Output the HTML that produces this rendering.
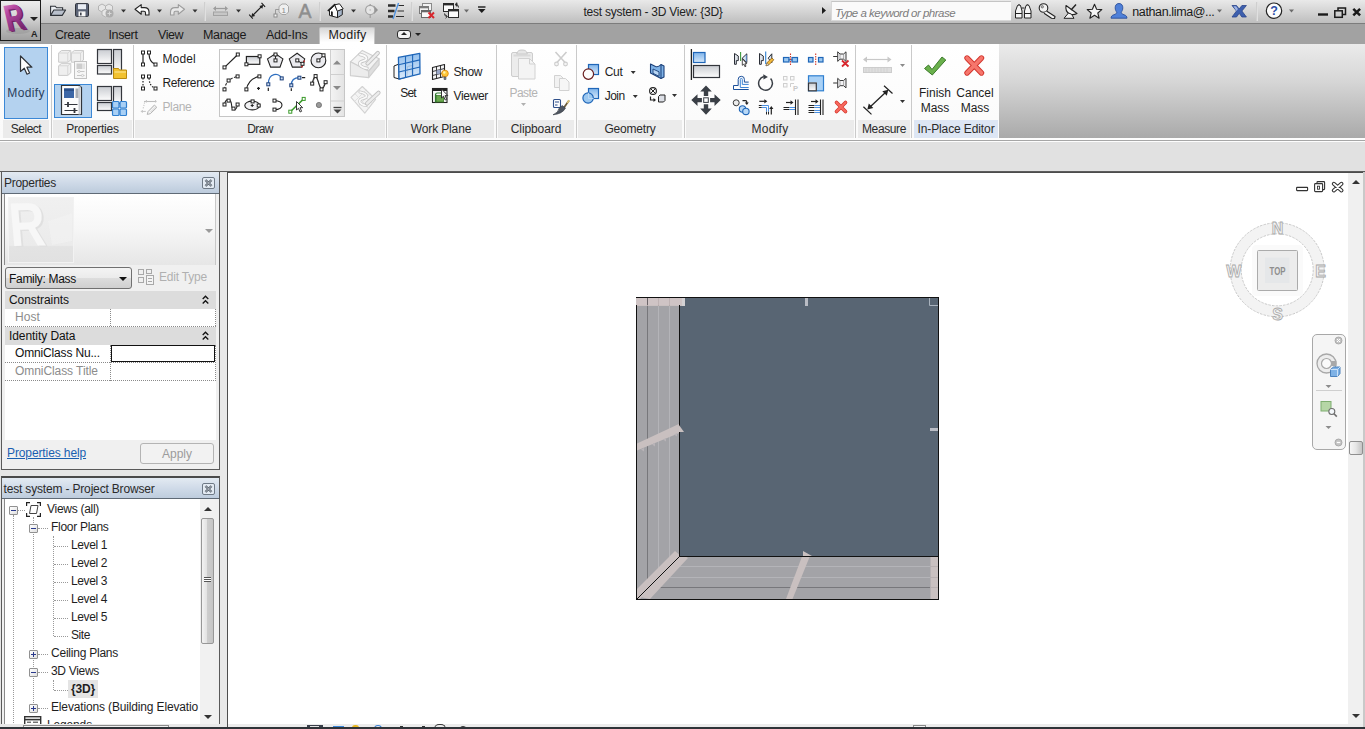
<!DOCTYPE html>
<html><head><meta charset="utf-8"><title>test system - 3D View: {3D}</title>
<style>
*{box-sizing:border-box;margin:0;padding:0}
html,body{width:1365px;height:729px;overflow:hidden;background:#e1e1e1;font-family:"Liberation Sans",sans-serif;font-size:12px;color:#1e1e1e}
.a{position:absolute}
.t{position:absolute;white-space:nowrap;line-height:14px;font-size:12px}
.c{text-align:center}
.dis{color:#b4b4b4}
svg{position:absolute;overflow:visible}
#title{left:0;top:0;width:1365px;height:24px;background:linear-gradient(#e9e9e9,#d4d4d4 50%,#bebebe);border-bottom:1px solid #7c7c7c}
#tabs{left:0;top:24px;width:1365px;height:20px;background:#a2a2a2}
#ribbon{left:0;top:44px;width:1365px;height:94px;background:linear-gradient(#ebebeb,#d6d6d6 40%,#a9a9a9)}
#ribwhite{left:0;top:44px;width:999px;height:94px;background:linear-gradient(#ffffff,#fafafa)}
#ribline1{left:0;top:140px;width:1365px;height:1px;background:#a6a6a6}
#ribline2{left:0;top:138px;width:1365px;height:4px;background:#fdfdfd}
#opt{left:0;top:142px;width:1365px;height:29px;background:#e1e1e1}
#optline{left:0;top:171px;width:1365px;height:1px;background:#5c5c5c}
.pl{position:absolute;top:120px;height:18px;padding-top:1px;background:#ebebeb;text-align:center;line-height:17px;font-size:12px;color:#2a2a2a;white-space:nowrap}
.sep{position:absolute;top:45px;width:1px;height:93px;background:#cacaca}
.tab{position:absolute;top:28px;line-height:15px;font-size:12.5px;color:#1a1a1a;white-space:nowrap}
.dd{position:absolute;width:0;height:0;border-left:3px solid transparent;border-right:3px solid transparent;border-top:3px solid #333}
.xb{position:absolute;width:9px;height:9px;border:1px solid #919191;background:linear-gradient(135deg,#fff,#e0e0e0);border-radius:1px}
.xb i{position:absolute;left:1px;top:3px;width:5px;height:1px;background:#2a3a8c}
.xb b{position:absolute;left:3px;top:1px;width:1px;height:5px;background:#2a3a8c}
</style></head><body>
<div id="title" class="a"></div>
<div id="tabs" class="a"></div>
<!-- app button -->
<div class="a" style="left:0;top:0;width:41px;height:41px;border:1px solid #1c1c1c;background:linear-gradient(#ededed,#d6d6d6 40%,#b4b4b4 75%,#a0a0a0)"></div>
<svg style="left:1px;top:1px" width="39" height="39" viewBox="0 0 39 39" font-family="Liberation Sans, sans-serif">
<defs><linearGradient id="rg" x1="0" y1="0" x2="0.300" y2="1"><stop offset="0" stop-color="#e6a8d6"/><stop offset="0.400" stop-color="#b84aa2"/><stop offset="1" stop-color="#6e2266"/></linearGradient></defs>
<ellipse cx="17" cy="30" rx="12" ry="3" fill="#8a8a8a" opacity="0.350"/>
<g transform="translate(6.500 30) rotate(-13) skewY(5) scale(0.700 1)">
<text x="2.600" y="1.500" font-size="37" font-weight="bold" fill="#6c1f64">R</text>
<text x="1.300" y="0.700" font-size="37" font-weight="bold" fill="#8e2f84">R</text>
<text x="0" y="0" font-size="37" font-weight="bold" fill="url(#rg)">R</text>
</g>
</svg>
<div class="t" style="left:31px;top:29px;font-size:9px;font-weight:bold;line-height:10px;color:#222">A</div>
<div class="dd" style="left:30px;top:17px;border-left-width:4px;border-right-width:4px;border-top-width:4px;border-top-color:#222"></div>
<div class="a" style="left:397px;top:30px;width:14px;height:9px;border:1px solid #2a2a2a;border-radius:3px;background:#f2f2f2"></div>
<div class="dd" style="left:401px;top:32px;border-top:none;border-bottom:3px solid #222"></div>
<div class="dd" style="left:415px;top:33px;border-top-color:#222"></div>
<!-- tabs -->
<div class="tab" style="letter-spacing:-0.42px;left:55px">Create</div>
<div class="tab" style="letter-spacing:-0.38px;left:108.500px">Insert</div>
<div class="tab" style="letter-spacing:-0.47px;left:158px">View</div>
<div class="tab" style="letter-spacing:-0.36px;left:203px">Manage</div>
<div class="tab" style="letter-spacing:-0.23px;left:266px">Add-Ins</div>
<div class="a" style="left:319px;top:27px;width:56px;height:18px;background:linear-gradient(#d6d6d6,#efefef 45%,#ffffff 85%);border:1px solid #c4c4c4;border-bottom:none;border-radius:2px 2px 0 0"></div>
<div class="tab" style="letter-spacing:0.20px;left:328.500px">Modify</div>
<!-- title text -->
<div class="t" style="letter-spacing:-0.25px;left:583.500px;top:5px;font-size:12px;color:#222">test system - 3D View: {3D}</div>
<!-- search box -->
<div class="a" style="left:831px;top:1px;width:180px;height:20px;background:#fafafa;border:1px solid #d8d8d8;border-right:none;border-top-color:#c4c4c4"></div>
<div class="t" style="letter-spacing:-0.50px;left:835px;top:6px;font-style:italic;color:#7c7c7c;font-size:11.5px">Type a keyword or phrase</div>
<div class="t" style="letter-spacing:-0.38px;left:1132.300px;top:5px;font-size:12.5px;color:#1a1a1a">nathan.lima@...</div>
<svg style="left:0;top:0" width="1365" height="24" viewBox="0 0 1365 24" fill="none" font-family="Liberation Sans, sans-serif">
<!-- open -->
<path d="M50.600 15.400V6.200h4.600l1.400 1.600h6v2.400" fill="#eceff3" stroke="#2e3238" stroke-width="1.100"/>
<path d="M50.600 15.400l3.200-5.400h11.800l-3.400 5.400z" fill="#b9c0cc" stroke="#2e3238" stroke-width="1.100" stroke-linejoin="round"/>
<!-- save -->
<rect x="75.500" y="3.600" width="13" height="12.800" rx="1" fill="#5b6375" stroke="#30343c" stroke-width="1"/>
<rect x="78" y="4.200" width="8" height="5" fill="#e9edf3"/>
<rect x="78.500" y="11.400" width="7" height="5" fill="#f6f6f6"/><rect x="80" y="12.600" width="1.600" height="2.800" fill="#3a3f4a"/>
<!-- sync disabled -->
<g stroke="#b4b4b4" stroke-width="1" fill="#e6e6e6"><path d="M98.500 6l3.500-2 3.500 2v4l-3.500 2-3.500-2z"/><path d="M105.500 6l3.500-2 3.500 2v4l-3.500 2-3.500-2z"/><path d="M102 11l3.500-2 3.500 2v4l-3.500 2-3.500-2z"/></g>
<circle cx="109.500" cy="13.500" r="4" fill="#adadad"/><path d="M107.500 13.500h4M109.500 11.500v4" stroke="#d8d8d8" stroke-width="1"/>
<!-- dropdown arrows -->
<g fill="#333"><path d="M121 9.500h5l-2.500 3z"/><path d="M157 9.500h5l-2.500 3z"/><path d="M192.500 9.500h5l-2.500 3z"/><path d="M236 9.500h5l-2.500 3z"/><path d="M351 9.500h5l-2.500 3z"/></g>
<g fill="#6a6a6a"><path d="M464 9.500h5l-2.500 3z"/><path d="M1217 9.500h5l-2.500 3z"/><path d="M1289 9.500h5l-2.500 3z"/></g>
<!-- undo -->
<path d="M135 9.300L141.200 4.600V7.600H144.500Q149 7.600 149 12V15H145.500V12.800Q145.500 11.200 144 11.200H141.200V14.200Z" fill="#fdfdfd" stroke="#222" stroke-width="1.100" stroke-linejoin="round"/>
<!-- redo -->
<path d="M184.500 9.300L178.300 4.600V7.600H175Q170.500 7.600 170.500 12V15H174V12.800Q174 11.200 175.500 11.200H178.300V14.200Z" fill="#e9e9e9" stroke="#9c9c9c" stroke-width="1.100" stroke-linejoin="round"/>
<!-- separators -->
<path d="M204.500 2V21M319.500 2V21M411.500 2V21M1256.500 2V21" stroke="#cfcfcf"/><path d="M205.500 2V21M320.500 2V21M412.500 2V21M1257.500 2V21" stroke="#e0e0e0"/>
<!-- measure gray -->
<path d="M214 8.500h13" stroke="#9c9c9c" stroke-width="1.200"/><path d="M213 8.500l3-2.500v5zM228 8.500l-3-2.500v5z" fill="#9c9c9c"/>
<rect x="213.500" y="12" width="14" height="3.500" fill="#c6c6c6" stroke="#a2a2a2"/>
<!-- aligned dim -->
<path d="M252.500 15.700L262 6.200" stroke="#1c1c1c" stroke-width="1.200"/><path d="M251.300 16.900l0.900-3.800 2.900 2.900zM263.200 5l-0.900 3.800-2.900-2.900z" fill="#1c1c1c"/>
<path d="M249.200 14.600l3.600 4M261.500 2.900l3.600 4" stroke="#1c1c1c" stroke-width="1.100"/>
<!-- tag -->
<path d="M279 6.500l3-2.500h4l2.500 2.500v5.500l-2.500 2.500h-4l-3-2.500z" fill="#efefef" stroke="#a6a6a6"/>
<path d="M279 9.500h-3.500v4.500" stroke="#9a9a9a"/><rect x="274" y="14" width="3" height="3" fill="#f4f4f4" stroke="#8c8c8c"/>
<text x="283.800" y="12.500" font-size="8" fill="#8a8a8a" text-anchor="middle">1</text>
<!-- A -->
<text x="305" y="18" font-size="19.500" fill="#8e8e8e" text-anchor="middle" stroke="#8e8e8e" stroke-width="0.500">A</text>
<!-- house -->
<path d="M329.500 10.200L334.700 5.200 337.500 10.800V17.600L329.500 15.400Z" fill="#fbfbfb" stroke="#1e1e1e" stroke-width="1" stroke-linejoin="round"/>
<path d="M337.500 10.800L342.300 8.800V14.700L337.500 17.600Z" fill="#a7b6ca" stroke="#1e1e1e" stroke-width="1" stroke-linejoin="round"/>
<path d="M334.700 4.800L339.500 3.800 343.200 8.800 337.300 11.200Z" fill="#fdfdfd" stroke="#1e1e1e" stroke-width="1" stroke-linejoin="round"/>
<path d="M328.300 10.500L334.700 4.600" stroke="#1e1e1e" stroke-width="1.700" stroke-linecap="round"/>
<path d="M331 11.200l1.800 0.500v4.600l-1.800-0.500z" fill="#1e1e1e"/>
<!-- section gray -->
<path d="M370.200 4v14" stroke="#a2a2a2" stroke-width="1.300"/>
<path d="M373.800 5.500l4.200 4.400-4.200 4.400z" fill="#929292"/>
<circle cx="370.200" cy="9.900" r="4.600" fill="#e6e6e6" stroke="#a2a2a2" stroke-width="1.200"/><circle cx="370.200" cy="9.900" r="0.900" fill="#c4c4c4"/>
<!-- thin lines -->
<path d="M388 5.500h7.500M388 11h6.500M388 16.500h5" stroke="#2c2c2c" stroke-width="2.600"/>
<path d="M398.500 5.500h5.500M397.500 11h6.500M396 16.500h8" stroke="#2c2c2c" stroke-width="1"/>
<path d="M398.500 3l-5.500 16" stroke="#4a90e2" stroke-width="1.300"/>
<!-- close hidden -->
<rect x="422.500" y="3.500" width="9" height="7" fill="#f2f2f2" stroke="#8a8a8a"/><rect x="419.500" y="6.500" width="9" height="7" fill="#f2f2f2" stroke="#7a7a7a"/><path d="M419.500 7.500h9" stroke="#7a7a7a" stroke-width="1.600"/>
<rect x="421.500" y="10.500" width="9" height="7" fill="#fafafa" stroke="#6a6a6a"/><path d="M421.500 11.500h9" stroke="#6a6a6a" stroke-width="1.600"/>
<path d="M428.500 12.500l5.500 5.500M434 12.500l-5.500 5.500" stroke="#d8262c" stroke-width="2"/>
<!-- switch windows -->
<rect x="443.500" y="3.500" width="10" height="8" fill="#fafafa" stroke="#2a2a2a"/><path d="M443.500 4.500h10" stroke="#2a2a2a" stroke-width="1.800"/>
<rect x="448.500" y="9.500" width="10" height="8" fill="#fafafa" stroke="#2a2a2a"/><path d="M448.500 10.500h10" stroke="#2a2a2a" stroke-width="1.800"/>
<path d="M456 4.500q2.500 0 2.500 3M444.500 13.500q0 3 2.500 3" stroke="#2a2a2a" stroke-width="1"/><path d="M455 4.500l2-1.800v3.600zM447.500 16.500l-2-1.800M447.500 16.500l-2 1.800" fill="#2a2a2a" stroke="#2a2a2a" stroke-width="0.800"/>
<!-- customize -->
<path d="M478 7h7.500" stroke="#1c1c1c" stroke-width="1.400"/><path d="M478 9h7.500l-3.750 4z" fill="#1c1c1c"/>
<!-- search expand arrow -->
<path d="M822 7l4 3.500-4 3.500z" fill="#1c1c1c"/>
<!-- binoculars -->
<g stroke="#222" stroke-width="1" fill="#f4f4f4"><path d="M1015.500 18v-7l2-5.500h3l1.500 5.500v7z"/><path d="M1024.500 18v-7l1.500-5.500h3l2 5.500v7z"/><path d="M1015.500 13.500h6.500M1024.500 13.500h6.500M1021.500 8h3" /><path d="M1017.500 5.500q1.500-2 3 0M1026 5.500q1.500-2 3 0"/></g>
<!-- key -->
<circle cx="1043.500" cy="8" r="4.300" fill="#f2f2f2" stroke="#222" stroke-width="1.100"/><circle cx="1042.300" cy="6.800" r="1.200" fill="#bdbdbd" stroke="#444" stroke-width="0.600"/>
<path d="M1046.500 11l8.500 5.500-0.500 2-3-0.300-7.500-5" fill="#f2f2f2" stroke="#222" stroke-width="1.100" stroke-linejoin="round"/>
<!-- satellite -->
<path d="M1066 5.500q-1 6 3.500 8.500 3.500 1.500 7.500-0.500z" fill="#f4f4f4" stroke="#222" stroke-width="1.100" stroke-linejoin="round"/><path d="M1071 10l5-5.500" stroke="#222" stroke-width="1.400"/><path d="M1064 18.300l4.500-5.300 3 1.200 2.500 4.100z" fill="#f4f4f4" stroke="#222" stroke-width="1" stroke-linejoin="round"/>
<!-- star -->
<path d="M1094.500 4.300l2.100 4.900 5.200 0.400-4 3.400 1.300 5.200-4.600-2.900-4.600 2.900 1.300-5.200-4-3.400 5.200-0.400z" fill="#f6f6f6" stroke="#222" stroke-width="1.100" stroke-linejoin="round"/>
<!-- user -->
<path d="M1119 3.500c2.800 0 3.800 2 3.800 4.300 0 2-0.800 3.500-1.600 4.400 0.200 1.600 1.200 2 3 2.600 1.800 0.600 2.600 1.400 2.800 3.400h-16c0.200-2 1-2.800 2.800-3.400 1.800-0.600 2.800-1 3-2.600-0.800-0.900-1.600-2.400-1.600-4.400 0-2.300 1-4.300 3.800-4.300z" fill="#4f80d8" stroke="#2a4f9c" stroke-width="0.900"/>
<!-- exchange X -->
<path d="M1232 5.500h4.500l2.700 3.500 2.700-3.500h4.500l-4.500 5.500 4.500 6h-4.500l-2.700-3.700-2.700 3.700h-4.500l4.500-6z" fill="#3d5fae" stroke="#2b458a" stroke-width="0.800" stroke-linejoin="round"/><path d="M1233.500 6.200h2.500l2 2.800-1.600 2z" fill="#9fb4e4"/>
<!-- help -->
<circle cx="1274" cy="10.700" r="7.700" fill="#fcfcfc" stroke="#222" stroke-width="1.200"/>
<text x="1274" y="15.200" font-size="12.500" font-weight="bold" fill="#2c4fa8" text-anchor="middle">?</text>
<!-- window buttons -->
<path d="M1318 14.500h10" stroke="#1a1a1a" stroke-width="2.400"/>
<rect x="1334.800" y="10.800" width="7.500" height="6.500" fill="none" stroke="#1a1a1a" stroke-width="1.500"/><path d="M1338 10.500V8h7.500v6.500h-3" stroke="#1a1a1a" stroke-width="1.500"/>
<path d="M1353.300 8.800l6.800 6.600M1360.100 8.800l-6.800 6.600" stroke="#1a1a1a" stroke-width="2.500"/>
</svg>
<div id="ribbon" class="a"></div>
<div id="ribwhite" class="a"></div>
<div id="ribline2" class="a"></div>
<div id="ribline1" class="a"></div>
<div id="opt" class="a"></div>
<div id="optline" class="a"></div>
<!-- panel labels -->
<div class="pl" style="letter-spacing:-0.49px;left:3px;width:46px">Select</div>
<div class="pl" style="letter-spacing:-0.20px;left:53px;width:79px">Properties</div>
<div class="pl" style="letter-spacing:-0.60px;left:135px;width:250px">Draw</div>
<div class="pl" style="letter-spacing:-0.14px;left:388px;width:106px">Work Plane</div>
<div class="pl" style="letter-spacing:-0.10px;left:498px;width:76px">Clipboard</div>
<div class="pl" style="letter-spacing:-0.21px;left:578px;width:104px">Geometry</div>
<div class="pl" style="letter-spacing:0.28px;left:686px;width:168px">Modify</div>
<div class="pl" style="letter-spacing:-0.38px;left:858px;width:52px">Measure</div>
<div class="pl" style="letter-spacing:-0.11px;left:914px;width:84px;background:#dde6f4">In-Place Editor</div>
<div class="sep" style="left:51px"></div>
<div class="sep" style="left:133px"></div>
<div class="sep" style="left:386px"></div>
<div class="sep" style="left:496px"></div>
<div class="sep" style="left:576px"></div>
<div class="sep" style="left:684px"></div>
<div class="sep" style="left:855px"></div>
<div class="sep" style="left:911px"></div>
<!-- Select -->
<div class="a" style="left:4px;top:47px;width:44px;height:72px;background:#b4d2ef;border:1px solid #3b88d6"></div>
<div class="t" style="letter-spacing:0.36px;left:7.300px;top:86px;color:#2a3f5c">Modify</div>
<!-- Properties -->
<div class="a" style="left:54px;top:84px;width:38px;height:34px;background:#b4d2ef;border:1px solid #3b88d6"></div>
<!-- Draw -->
<div class="t" style="letter-spacing:0.16px;left:162.400px;top:52px">Model</div>
<div class="t" style="letter-spacing:-0.38px;left:162.400px;top:76px">Reference</div>
<div class="t dis" style="letter-spacing:-0.34px;left:162.400px;top:100px">Plane</div>
<div class="a" style="left:219px;top:49px;width:126px;height:68px;background:#fff;border:1px solid #c6c6c6"></div>
<div class="a" style="left:330px;top:50px;width:14px;height:66px;background:linear-gradient(90deg,#f4f4f4,#e4e4e4)"></div>
<!-- Work plane -->
<div class="t" style="letter-spacing:-0.84px;left:400.300px;top:86px">Set</div>
<div class="t" style="letter-spacing:-0.38px;left:453.500px;top:65px">Show</div>
<div class="t" style="letter-spacing:-0.33px;left:453.500px;top:89px">Viewer</div>
<!-- Clipboard -->
<div class="t dis" style="letter-spacing:-0.54px;left:509.500px;top:86px">Paste</div>
<!-- Geometry -->
<div class="t" style="letter-spacing:-0.23px;left:604.700px;top:65px">Cut</div>
<div class="t" style="letter-spacing:-0.50px;left:604.700px;top:89px">Join</div>
<!-- In place -->
<div class="t c" style="left:914px;width:42px;top:86px">Finish</div>
<div class="t c" style="left:914px;width:42px;top:101px">Mass</div>
<div class="t c" style="left:954px;width:42px;top:86px">Cancel</div>
<div class="t c" style="left:954px;width:42px;top:101px">Mass</div>
<svg style="left:0;top:44px" width="1000" height="94" viewBox="0 44 1000 94" fill="none" font-family="Liberation Sans, sans-serif">
<defs>
<linearGradient id="gsq" x1="0" y1="0" x2="0" y2="1"><stop offset="0" stop-color="#c9ccd1"/><stop offset="1" stop-color="#fdfdfd"/></linearGradient>
<linearGradient id="bsq" x1="0" y1="0" x2="0" y2="1"><stop offset="0" stop-color="#7fb4ea"/><stop offset="1" stop-color="#d6e8fa"/></linearGradient>
</defs>
<!-- cursor -->
<path d="M20.500 56v15.500l3.800-3.300 2.700 6 2.600-1.200-2.700-5.800h5z" fill="#fdfdfd" stroke="#30343a" stroke-width="1.200" stroke-linejoin="round"/>
<!-- type properties disabled -->
<g stroke="#cacaca" fill="#efefef" stroke-width="1" stroke-linejoin="round"><path d="M58.600 53l3-2.500h9.200v9.500l-3 2.200h-9.200z"/><path d="M71.300 53l3-2.500h9.200v9.500l-3 2.200h-9.200z"/><path d="M58.600 65.800l3-2.500h9.200v9.500l-3 2.600h-9.200z"/><path d="M58.600 53h9.200v9.200M67.800 53l3-2.500M71.300 53h9.200v9.200M80.500 53l3-2.500M58.600 65.800h9.200v9.600M67.800 65.800l3-2.500" fill="none" stroke="#d6d6d6"/></g>
<rect x="74.500" y="61.500" width="12" height="17" fill="#f6f6f6" stroke="#c2c2c2"/><rect x="76.500" y="63.500" width="6" height="5.500" fill="#cdcdcd"/><rect x="83.300" y="63.500" width="1.500" height="5.500" fill="#dcdcdc"/><path d="M77 71.500h7.500M77 75.500h7.500" stroke="#c6c6c6"/><circle cx="79" cy="71.500" r="1.100" fill="#f6f6f6" stroke="#c0c0c0" stroke-width="0.700"/><circle cx="82.500" cy="75.500" r="1.100" fill="#f6f6f6" stroke="#c0c0c0" stroke-width="0.700"/>
<!-- family types -->
<rect x="97.500" y="49.500" width="14" height="14" fill="url(#gsq)" stroke="#33363c" stroke-width="1.200"/>
<rect x="113.500" y="49.500" width="8" height="24" fill="url(#gsq)" stroke="#33363c" stroke-width="1.200"/>
<rect x="97.500" y="65.500" width="14" height="8.500" fill="url(#gsq)" stroke="#33363c" stroke-width="1.200"/>
<path d="M113.500 78.500v-10h5l1 1.500h7v8.500z" fill="#f2c230" stroke="#b98a10" stroke-width="1"/><path d="M114.500 72h11.500" stroke="#fbe28a" stroke-width="1.200"/>
<!-- properties -->
<path d="M61.500 85.500h18l2 2v27h-20z" fill="#fcfcfc" stroke="#30343a" stroke-width="1.200"/>
<path d="M79.500 86v28.500" stroke="#c8ccd2" stroke-width="2"/>
<rect x="64" y="88.500" width="10" height="9.500" fill="#3d67a6"/><rect x="64" y="88.500" width="10" height="2.500" fill="#2b4f88"/>
<rect x="75.500" y="88.500" width="3" height="9.500" fill="#a9adb4"/>
<path d="M64.500 104.500h13M64.500 110.500h13" stroke="#33363c" stroke-width="1.200"/><path d="M68 102v5M74.500 108v5" stroke="#33363c" stroke-width="1.800"/>
<!-- family category -->
<rect x="97.500" y="86.500" width="14" height="14" fill="url(#gsq)" stroke="#33363c" stroke-width="1.200"/>
<rect x="113.500" y="86.500" width="8" height="17" fill="url(#gsq)" stroke="#33363c" stroke-width="1.200"/>
<rect x="97.500" y="102.500" width="14" height="8" fill="url(#gsq)" stroke="#33363c" stroke-width="1.200"/>
<g fill="#a9d0f5" stroke="#2f7fd0" stroke-width="1.200"><rect x="112.500" y="101.500" width="6.500" height="6.500" rx="1"/><rect x="120" y="101.500" width="6.500" height="6.500" rx="1"/><rect x="112.500" y="109" width="6.500" height="6.500" rx="1"/><rect x="120" y="109" width="6.500" height="6.500" rx="1"/></g>
<path d="M143 54v9M149 54q0.500 8.500 6 10" stroke="#222" stroke-width="1.200"/>
<rect x="141.5" y="51.0" width="3" height="3" fill="#fff" stroke="#222" stroke-width="1"/><rect x="147.5" y="51.0" width="3" height="3" fill="#fff" stroke="#222" stroke-width="1"/><rect x="141.5" y="63.0" width="3" height="3" fill="#fff" stroke="#222" stroke-width="1"/><rect x="154.0" y="63.0" width="3" height="3" fill="#fff" stroke="#222" stroke-width="1"/>
<path d="M143 78v9M149 78q0.500 8.500 6 10" stroke="#222" stroke-width="1.200" stroke-dasharray="1.500 1.500"/>
<rect x="141.5" y="75.0" width="3" height="3" fill="#fff" stroke="#222" stroke-width="1"/><rect x="147.5" y="75.0" width="3" height="3" fill="#fff" stroke="#222" stroke-width="1"/><rect x="141.5" y="87.0" width="3" height="3" fill="#fff" stroke="#222" stroke-width="1"/><rect x="154.0" y="87.0" width="3" height="3" fill="#fff" stroke="#222" stroke-width="1"/>
<path d="M144 101.500h12.500" stroke="#bdbdbd" stroke-width="1.100"/><path d="M146.400 100v2.500M155.600 100v2.500M142.300 110v2.800M140.800 111.400h5" stroke="#c4c4c4" stroke-width="1"/><path d="M144.600 102.500L143 109" stroke="#c8c8c8" stroke-width="1.100" stroke-dasharray="1.200 1.200"/><path d="M147.200 114.400l0.900-2.900 6.300-6.500 2.400 2.400-6.500 6.300z" fill="#f4f4f4" stroke="#b4b4b4" stroke-width="1" stroke-linejoin="round"/><path d="M149.300 110.600l5.200-5.200M150.500 112l5.300-5.300" stroke="#c8c8c8" stroke-width="0.700"/>
<path d="M330.500 50v66M330.500 74.500h14M330.500 101h14" stroke="#cfcfcf"/>
<path d="M333 64.500h8l-4-4z" fill="#8a8a8a"/><path d="M333 86h8l-4 4z" fill="#8a8a8a"/><path d="M333.500 107.500h8" stroke="#444" stroke-width="1.300"/><path d="M333.500 109.500h8l-4 4z" fill="#444"/>
<path d="M224.500 67.400L237.800 54.500" stroke="#222" stroke-width="1.200"/><rect x="223.0" y="65.9" width="3" height="3" fill="#fff" stroke="#222" stroke-width="1"/><rect x="236.3" y="53.0" width="3" height="3" fill="#fff" stroke="#222" stroke-width="1"/>
<rect x="246.400" y="56.500" width="13.400" height="7.800" fill="url(#gsq)" stroke="#222" stroke-width="1.200"/><rect x="258.1" y="54.8" width="3" height="3" fill="#fff" stroke="#222" stroke-width="1"/><rect x="244.9" y="62.8" width="3" height="3" fill="#fff" stroke="#222" stroke-width="1"/>
<path d="M275.500 53.700L282.900 58.900 280 67.100H270.600L267.500 58.900Z" fill="#ebebef" stroke="#222" stroke-width="1.100"/><path d="M275.500 54.500v6" stroke="#222"/><rect x="274.0" y="53.0" width="3" height="3" fill="#fff" stroke="#222" stroke-width="1"/><rect x="274.0" y="58.9" width="3" height="3" fill="#fff" stroke="#222" stroke-width="1"/>
<path d="M297.100 53.200L304.700 58.900 301.900 67.100H292.400L289.300 58.900Z" fill="#ebebef" stroke="#222" stroke-width="1.100"/><path d="M297.300 60.400L302.500 63.800" stroke="#222"/><path d="M304.500 60.500L301.500 67.500" stroke="#e02020" stroke-width="1.200"/><rect x="295.8" y="58.9" width="3" height="3" fill="#fff" stroke="#222" stroke-width="1"/><rect x="301.0" y="62.3" width="3" height="3" fill="#fff" stroke="#222" stroke-width="1"/>
<circle cx="318.400" cy="60.400" r="7.400" fill="#ebebef" stroke="#222" stroke-width="1.100"/><path d="M318.400 60.400L323.500 55.300" stroke="#222"/><rect x="316.9" y="58.9" width="3" height="3" fill="#fff" stroke="#222" stroke-width="1"/><rect x="322.0" y="53.8" width="3" height="3" fill="#fff" stroke="#222" stroke-width="1"/>
<path d="M224.500 89.400Q226 79 237.600 76.400" stroke="#222" stroke-width="1.100" stroke-dasharray="2.500 1.500"/><rect x="223.0" y="87.9" width="3" height="3" fill="#fff" stroke="#222" stroke-width="1"/><rect x="227.1" y="79.0" width="3" height="3" fill="#fff" stroke="#222" stroke-width="1"/><rect x="236.1" y="74.9" width="3" height="3" fill="#fff" stroke="#222" stroke-width="1"/>
<path d="M246.400 89.400Q248.500 78.500 259.400 76.400" stroke="#222" stroke-width="1.100"/><path d="M257 88.400h3M258.500 86.900v3" stroke="#222" stroke-width="1.100"/><rect x="244.9" y="87.9" width="3" height="3" fill="#fff" stroke="#222" stroke-width="1"/><rect x="257.9" y="74.9" width="3" height="3" fill="#fff" stroke="#222" stroke-width="1"/>
<path d="M268.300 84.300C268.300 72.500 279 72.500 281.700 78.400" stroke="#2f6fc0" stroke-width="1.300"/><path d="M268.300 87.700v3.200" stroke="#222" stroke-width="1.200"/><rect x="266.8" y="82.8" width="3" height="3" fill="#cfe0f6" stroke="#1c3f7a" stroke-width="1"/><rect x="280.2" y="76.9" width="3" height="3" fill="#cfe0f6" stroke="#1c3f7a" stroke-width="1"/>
<path d="M291.300 85.300Q291.300 77.700 299.400 77.700" stroke="#2f6fc0" stroke-width="1.300"/><path d="M291.300 88.200v2.800M302 77.700h3.200" stroke="#222" stroke-width="1.200"/><rect x="289.8" y="83.8" width="3" height="3" fill="#cfe0f6" stroke="#1c3f7a" stroke-width="1"/><rect x="297.9" y="76.2" width="3" height="3" fill="#cfe0f6" stroke="#1c3f7a" stroke-width="1"/>
<path d="M312.200 83.600L315.600 76.100 321.500 89.400 325.600 82.200" stroke="#9a9a9a" stroke-width="1"/><path d="M312.200 83.600C314 74 317 76 318.500 82.500S323 92 325.600 82.200" stroke="#222" stroke-width="1.100"/><rect x="314.1" y="74.6" width="3" height="3" fill="#fff" stroke="#222" stroke-width="1"/><rect x="310.7" y="82.1" width="3" height="3" fill="#fff" stroke="#222" stroke-width="1"/><rect x="324.1" y="80.7" width="3" height="3" fill="#fff" stroke="#222" stroke-width="1"/><rect x="320.0" y="87.9" width="3" height="3" fill="#fff" stroke="#222" stroke-width="1"/>
<path d="M224.500 104.500C225.500 98 231 98.500 231.500 104.500S236 112 237.600 104.500" stroke="#222" stroke-width="1.100"/><rect x="223.0" y="103.0" width="3" height="3" fill="#fff" stroke="#222" stroke-width="1"/><rect x="227.1" y="99.1" width="3" height="3" fill="#fff" stroke="#222" stroke-width="1"/><rect x="232.0" y="107.1" width="3" height="3" fill="#fff" stroke="#222" stroke-width="1"/><rect x="236.1" y="103.0" width="3" height="3" fill="#fff" stroke="#222" stroke-width="1"/>
<ellipse cx="252.200" cy="105.500" rx="7.400" ry="4.400" fill="#f2f2f4" stroke="#222" stroke-width="1.100"/><path d="M250.700 105.500h3M252.200 104v3" stroke="#222" stroke-width="1.100"/><rect x="251.1" y="99.9" width="3" height="3" fill="#fff" stroke="#222" stroke-width="1"/><rect x="257.2" y="104.0" width="3" height="3" fill="#fff" stroke="#222" stroke-width="1"/>
<path d="M274.500 100.600C284.500 100.600 284.500 109.600 274.500 109.600" stroke="#222" stroke-width="1.100"/><rect x="273.0" y="99.1" width="3" height="3" fill="#fff" stroke="#222" stroke-width="1"/><rect x="273.0" y="108.1" width="3" height="3" fill="#fff" stroke="#222" stroke-width="1"/>
<path d="M290.300 111.700L303.700 98.900" stroke="#3a9a2a" stroke-width="1.500"/><rect x="288.8" y="110.2" width="3" height="3" fill="#fff" stroke="#3a9a2a" stroke-width="1"/><rect x="302.2" y="97.4" width="3" height="3" fill="#fff" stroke="#3a9a2a" stroke-width="1"/><path d="M296.500 101.500v8.500l2-1.700 1.600 3.700 1.500-0.700-1.600-3.600h2.700z" fill="#fff" stroke="#222" stroke-width="0.900" stroke-linejoin="round"/>
<circle cx="318.900" cy="105" r="2.600" fill="#9a9a9a" stroke="#6a6a6a" stroke-width="0.800"/>
<g stroke-linejoin="round" stroke-linecap="round">
<path d="M350.400 61.800L362.300 50.400 379.100 58.800 368.700 71.200Z" fill="#f3f3f3" stroke="#cfcfcf" stroke-width="1.100"/>
<path d="M350.400 61.800V75.600L368.700 77.600V71.200Z" fill="#ececec" stroke="#cfcfcf" stroke-width="1.100"/>
<path d="M368.700 71.200L379.100 58.800V64.800L368.700 77.600Z" fill="#dedede" stroke="#cfcfcf" stroke-width="1.100"/>
<path d="M360 54.500q5.500 1 6.500 3.500 0.500 2-3.500 3-4.500 1.200-3 4 1.500 2.500 7 3.300" fill="none" stroke="#c6c6c6" stroke-width="3.400"/>
<path d="M360 54.500q5.500 1 6.500 3.500 0.500 2-3.500 3-4.500 1.200-3 4 1.500 2.500 7 3.300" fill="none" stroke="#fafafa" stroke-width="1.800"/>
<path d="M367.500 63.500L377.800 53" stroke="#c2c2c2" stroke-width="4.200"/><path d="M367.500 63.500L377.800 53" stroke="#ececec" stroke-width="2.400"/>
<path d="M351 97.400L362.300 86.500 375.600 99.300 364.800 113.200Z" fill="#f4f4f4" stroke="#d2d2d2" stroke-width="1.100"/>
<path d="M355 93.700l13.500 14.500M358.800 90l13.500 13.800M354.500 101.500l11.500-11.500M358.500 106l11.500-12.500" stroke="#dedede" stroke-width="0.900"/>
<path d="M360 92q5.500 1 6.500 3.500 0.500 2-3.500 3-4.500 1.200-3 4 1.500 2.500 6 3" fill="none" stroke="#c8c8c8" stroke-width="3.200"/>
<path d="M360 92q5.500 1 6.500 3.500 0.500 2-3.500 3-4.500 1.200-3 4 1.500 2.500 6 3" fill="none" stroke="#fafafa" stroke-width="1.700"/>
<path d="M367 103.500L378.500 92.800" stroke="#c2c2c2" stroke-width="4.200"/><path d="M367 103.500L378.500 92.800" stroke="#ececec" stroke-width="2.400"/>
</g>
<path d="M394 66l5-2v15l-5-1.500z" fill="#fafafa" stroke="#222" stroke-width="1"/><path d="M399 79.200l8-2.200 0.500-10.500 4.500-1v10" fill="#f0f0f0" stroke="#333" stroke-width="0.800"/>
<path d="M398.400 57.400L419.800 53.300 420 73.800 399 79.200Z" fill="url(#bsq)" fill-opacity="0.850" stroke="#1f66b8" stroke-width="1.300" stroke-linejoin="round"/>
<path d="M405.500 56v21.500M412.600 54.700v21M398.600 64.700l21.300-4.800M398.800 72l21.200-5" stroke="#1f66b8" stroke-width="1.100"/>
<path d="M432.500 67.500l12-3v12l-12 3z" fill="#f4f4f6" stroke="#222" stroke-width="1.100" stroke-linejoin="round"/><path d="M436.500 66.500v12M440.500 65.500v12M432.500 71.500l12-3M432.500 75.500l12-3" stroke="#222" stroke-width="0.900"/><path d="M436.500 70.500l4-1v4l-4 1z" fill="#9aa7c8"/>
<circle cx="445" cy="73.500" r="3.300" fill="#ffc83a" stroke="#e08a10" stroke-width="0.900"/><path d="M444 77h2v2.500h-2z" fill="#7a8088" stroke="#4a4f58" stroke-width="0.600"/><circle cx="444.300" cy="72.500" r="1.200" fill="#fff2b0"/>
<rect x="432.500" y="88.500" width="14.500" height="14" fill="#fafafa" stroke="#222" stroke-width="1.100"/><path d="M432.500 90h14.500" stroke="#222" stroke-width="2"/><path d="M435.500 102.500v-7.500q0-2 2-2h6" stroke="#2f7a2f" stroke-width="1.200" fill="none"/><rect x="436.500" y="95.500" width="7" height="6.500" fill="#6aa84f" stroke="#3c7a2c" stroke-width="0.800"/>
<path d="M441.500 89v9l2-1.800 1.700 3.800 1.500-0.700-1.700-3.700h2.800z" fill="#fff" stroke="#222" stroke-width="0.900" stroke-linejoin="round"/>
<rect x="511.500" y="52.500" width="21" height="24" rx="1.500" fill="#ececec" stroke="#cdcdcd"/><path d="M513.500 55.500h17" stroke="#dadada" stroke-width="2"/><path d="M517.500 52.500q0-2.500 4.500-2.500t4.500 2.500l1 1.500h-11z" fill="#e6e6e6" stroke="#cbcbcb"/><path d="M518.500 58.500h11l5.500 5.500v15h-16.500z" fill="#f4f4f4" stroke="#d2d2d2"/><path d="M529.500 58.500v5.500h5.500" stroke="#d2d2d2"/>
<path d="M521 103h5l-2.500 3z" fill="#b0b0b0"/>
<path d="M555.500 52l10 11M566.500 52l-10 11" stroke="#cdcdcd" stroke-width="1.600"/><circle cx="556.500" cy="64" r="1.900" fill="#f4f4f4" stroke="#cdcdcd" stroke-width="1.100"/><circle cx="565.500" cy="64" r="1.900" fill="#f4f4f4" stroke="#cdcdcd" stroke-width="1.100"/>
<path d="M554.500 75.500h6l3 3v9h-9z" fill="#f2f2f2" stroke="#d2d2d2"/><path d="M559.500 78.500h6l3.500 3.500v8.500h-9.500z" fill="#f6f6f6" stroke="#d2d2d2"/>
<rect x="553.500" y="99.500" width="7" height="8" rx="1" fill="#fdfdfd" stroke="#2f4f8a" stroke-width="1.100"/><path d="M555 102h4M555 105h2.500" stroke="#2f4f8a" stroke-width="1"/><path d="M569 100.500l-5 7" stroke="#6a5a3a" stroke-width="1.800"/><path d="M569.200 100.200l-2 2.800" stroke="#d8c07a" stroke-width="1.800"/><path d="M562 105.500l3.500 2.500q-3 6-12.500 6.800 5.500-2.300 6-6.300z" fill="#4e5560" stroke="#2e343c" stroke-width="0.600"/>
<rect x="588.500" y="64.500" width="10" height="10" fill="url(#bsq)" stroke="#1f66b8" stroke-width="1.200"/><circle cx="588.400" cy="74.100" r="5.200" fill="#fdfdfd" stroke="#6a1f1f" stroke-width="1.200"/>
<rect x="588.500" y="88.500" width="10" height="10" fill="url(#bsq)" stroke="#1f66b8" stroke-width="1.200"/><circle cx="588.100" cy="98" r="5.200" fill="#9cc8f0" stroke="#1f66b8" stroke-width="1.200"/><path d="M588.500 92.800v5.700h5" stroke="#bcd9f5" stroke-width="1" fill="none"/>
<path d="M630.700 71h5l-2.500 3zM632.800 95h5l-2.500 3zM672 94h5l-2.500 3z" fill="#333"/>
<path d="M650.500 64l5 2.500q3 1 5.500-2l3 1.500v11l-3 1.500-10.500-5.500z" fill="#7eb2e6" stroke="#1b3f78" stroke-width="1.100" stroke-linejoin="round"/><path d="M661 64.500v14" stroke="#1b3f78" stroke-width="1"/><path d="M653 69l6 2.800v4.500l-6-3z" fill="#b8d6f4" stroke="#1b3f78" stroke-width="0.900"/>
<circle cx="653" cy="91" r="3.400" fill="#fdfdfd" stroke="#222" stroke-width="1.100"/><path d="M650.800 88.800l4.400 4.400M655.200 88.800l-4.400 4.400" stroke="#222" stroke-width="1"/><path d="M658.500 96.500l1.500-1.500h5v5.500l-1.500 1.500h-5z" fill="#dcdfe6" stroke="#222" stroke-width="1" stroke-linejoin="round"/><path d="M650.500 96.500v3.500h3.500" stroke="#222" stroke-width="1.200"/><path d="M653.500 98l2.500 2-2.500 2z" fill="#222"/>
<path d="M691.400 49v31" stroke="#222" stroke-width="1.300"/><rect x="693.500" y="52.500" width="11.500" height="10" fill="url(#bsq)" stroke="#1f66b8" stroke-width="1.200"/><rect x="693.500" y="65.500" width="26" height="12" fill="url(#gsq)" stroke="#33363c" stroke-width="1.200"/>
<g fill="#3a3f46"><path d="M706 85.400l5.800 6.200h-3.600v4.400h-4.400v-4.400h-3.600z"/><path d="M706 114.800l5.800-6.200h-3.600v-4.400h-4.400v4.400h-3.600z"/><path d="M691.300 100.100l6.200-5.800v3.600h4.400v4.400h-4.400v3.600z"/><path d="M720.700 100.100l-6.200-5.800v3.600h-4.400v4.400h4.400v3.600z"/></g><rect x="703.700" y="97.800" width="4.600" height="4.600" fill="#fdfdfd" stroke="#3a3f46" stroke-width="1"/>
<path d="M734.500 53.500L738.300 56V60.600H736.300V64.300H734.500Z" fill="#dfe3ea" stroke="#2a2e36" stroke-width="1" stroke-linejoin="round"/><path d="M746.800 53.800V62.600L742.200 58.200Z" fill="#dbe6f4" stroke="#2a2e36" stroke-width="1" stroke-linejoin="round"/><path d="M746.300 55v6.400" stroke="#5a93d6" stroke-width="0.900"/><path d="M740.600 52v9" stroke="#3c9a3c" stroke-width="1.100"/><path d="M742.300 58.800v6.500l1.500-1.200 1.100 2.600 1.100-0.500-1.100-2.500h1.900z" fill="#fff" stroke="#222" stroke-width="0.800" stroke-linejoin="round"/>
<path d="M759.500 53.500L763.300 56V60.600H761.300V64.300H759.500Z" fill="#dfe3ea" stroke="#2a2e36" stroke-width="1" stroke-linejoin="round"/><path d="M771.800 53.800V62.600L768.200 58.200Z" fill="#dbe6f4" stroke="#2a2e36" stroke-width="1" stroke-linejoin="round"/><path d="M765.700 51.500v12.500" stroke="#2f7fd0" stroke-width="1.100"/><path d="M766 65.800l0.900-3 5-4.900 1.900 1.900-4.900 5z" fill="#f2b93a" stroke="#8a5a10" stroke-width="0.800" stroke-linejoin="round"/><path d="M766 65.800l0.900-3 2 2z" fill="#f6e6c8" stroke="#555" stroke-width="0.500"/>
<rect x="783.500" y="57.500" width="5.500" height="4.500" fill="#9cc8f0" stroke="#1f66b8" stroke-width="1.200"/><rect x="792" y="57.500" width="5.500" height="4.500" fill="#9cc8f0" stroke="#1f66b8" stroke-width="1.200"/><path d="M788.500 59.800h4" stroke="#1f66b8" stroke-width="1.200"/><path d="M790.500 53.500v12.500" stroke="#d43a2a" stroke-width="1.100" stroke-dasharray="1.500 1"/>
<rect x="808.500" y="57.500" width="4.500" height="4.500" fill="#9cc8f0" stroke="#1f66b8" stroke-width="1.200"/><rect x="818.500" y="57.500" width="4.500" height="4.500" fill="#9cc8f0" stroke="#1f66b8" stroke-width="1.200"/><path d="M815.700 53.500v12.500" stroke="#d43a2a" stroke-width="1.100" stroke-dasharray="1.500 1"/>
<path d="M833.200 56.500h4.500" stroke="#333" stroke-width="1"/><path d="M837.700 51.800l2.300 2.200h3.600l2.400-2.200v9.600l-2.400-2.200h-3.600l-2.300 2.200z" fill="#f2f2f4" stroke="#3a3a3a" stroke-width="1" stroke-linejoin="round"/><path d="M840 54v5M843.600 54v5" stroke="#8a8a8a" stroke-width="0.700"/><path d="M842 60.500l6.500 6M848.500 60.500l-6.500 6" stroke="#d8262c" stroke-width="1.800"/>
<path d="M748.700 82.100H744.400V79.400Q744.400 76.300 741.300 76.300Q738.200 76.300 738.200 79.400V85.500H733.500V89.500H748.700" fill="none" stroke="#1b4f9a" stroke-width="1"/><path d="M748.700 84.400H742.300V79.400Q742.300 78.400 741.300 78.400Q740.300 78.400 740.300 79.400V87.500H748.700" fill="none" stroke="#3f85d6" stroke-width="1"/>
<path d="M763.800 76.600A6.900 6.900 0 1 0 770.600 78.600" fill="none" stroke="#3a3f46" stroke-width="1.500"/><path d="M763.300 74.300l4.600 2.600-4.400 2.600z" fill="#3a3f46"/>
<g fill="#fafafa" stroke="#cfcfcf"><rect x="783.500" y="76.500" width="3.500" height="3.500"/><rect x="790.500" y="76.500" width="3.500" height="3.500"/><rect x="783.500" y="83.500" width="3.500" height="3.500"/><path d="M794 83.500h-3.500v3.500" fill="none"/></g><text x="795.500" y="91" font-size="7.500" font-weight="bold" fill="#c8c8c8" text-anchor="middle">P</text>
<rect x="808.500" y="75.800" width="15" height="15" fill="#a9d1f6" stroke="#2f7fd0" stroke-width="1.200"/><rect x="808.300" y="82.300" width="8.700" height="8.700" fill="#f4f8fc"/><rect x="808.500" y="83" width="7.800" height="7.800" fill="url(#gsq)" stroke="#33363c" stroke-width="1.200"/>
<path d="M833.200 83h4.500" stroke="#333" stroke-width="1"/><path d="M837.700 78.300l2.300 2.200h3.600l2.400-2.200v9.600l-2.400-2.200h-3.600l-2.300 2.200z" fill="#f2f2f4" stroke="#3a3a3a" stroke-width="1" stroke-linejoin="round"/><path d="M840 80.500v5M843.600 80.500v5" stroke="#8a8a8a" stroke-width="0.700"/>
<circle cx="736.200" cy="102.800" r="3" fill="#ececec" stroke="#3a3a3a" stroke-width="1"/><circle cx="742.500" cy="109" r="3.200" fill="#b8d8f6" stroke="#1f66b8" stroke-width="1.100"/><circle cx="745.900" cy="111.400" r="3.200" fill="#b8d8f6" stroke="#1f66b8" stroke-width="1.100"/><path d="M742.500 100.600h3q1.300 0 1.300 1.500v1" fill="none" stroke="#222" stroke-width="1.200"/><path d="M744.800 102.600l2 2.500 2-2.500z" fill="#222"/>
<path d="M759.300 101.300h5.500" stroke="#222" stroke-width="1.200"/><path d="M764.300 99.200l3 2.100-3 2.100z" fill="#222"/><path d="M758.800 105.500h3M758.800 107.500h3M766.500 111.500v3M768.500 111.500v3" stroke="#222" stroke-width="1"/><path d="M761.800 105.500H768.500V111.500M761.800 107.500H766.500V111.500" fill="none" stroke="#4a90e2" stroke-width="1"/><path d="M771.300 114.500v-6" stroke="#222" stroke-width="1.200"/><path d="M769.200 109l2.100-3 2.100 3z" fill="#222"/>
<path d="M786 102.500h5" stroke="#222" stroke-width="1.200"/><path d="M790.500 100.300l3 2.200-3 2.200z" fill="#222"/><path d="M783.500 107.500h6M783.500 109.500h6" stroke="#222" stroke-width="1"/><path d="M789.500 107.500h6.500M789.500 109.500h6.500" stroke="#4a90e2" stroke-width="1"/><path d="M795.500 99.500v15.500M798 99.500v15.500" stroke="#222" stroke-width="1.100"/>
<path d="M811 101.500h5" stroke="#222" stroke-width="1.200"/><path d="M815.500 99.300l3 2.200-3 2.200z" fill="#222"/><path d="M808.500 105.500h6M808.500 107.500h6M808.500 110.500h6M808.500 112.500h6" stroke="#222" stroke-width="1"/><path d="M814.500 105.500h6M814.500 107.500h6M814.500 110.500h6M814.500 112.500h6" stroke="#4a90e2" stroke-width="1"/><path d="M820.500 99.500v15.500M823 99.500v15.500" stroke="#222" stroke-width="1.100"/>
<path d="M836.500 102.500l9 9M845.500 102.500l-9 9" stroke="#d4382e" stroke-width="3.600" stroke-linecap="round"/><path d="M836.500 102.500l9 9M845.500 102.500l-9 9" stroke="#f8695e" stroke-width="2.200" stroke-linecap="round"/>
<path d="M864 59.500h25" stroke="#c8c8c8" stroke-width="1.200"/><path d="M863 59.500l4-3v6zM891.500 59.500l-4-3v6z" fill="#c8c8c8"/><rect x="863.500" y="67.500" width="28" height="5" fill="#dedede" stroke="#cdcdcd"/><path d="M866 67.500v5M869 67.500v5M872 67.500v5M875 67.500v5M878 67.500v5M881 67.500v5M884 67.500v5M887 67.500v5" stroke="#cfcfcf" stroke-width="0.700"/>
<path d="M900 64h5l-2.500 3z" fill="#8a8a8a"/><path d="M900 100h5l-2.500 3z" fill="#333"/>
<path d="M870 107L886 92" stroke="#222" stroke-width="1.300"/><path d="M867.300 109.500l1.500-6 4.500 4.500zM888.300 89.700l-1.500 6-4.500-4.500z" fill="#222"/><path d="M863.400 106.700l8.100 7.700M884 85.700l8.500 7.800" stroke="#222" stroke-width="1.200"/>
<path d="M924.500 68.500l4-3.500 3.500 4.500 10-12.500 3.800 3-13.500 15z" fill="#6ab04c" stroke="#3c7a2c" stroke-width="1" stroke-linejoin="round"/>
<path d="M967 58l14.500 15M981.500 58L967 73" stroke="#d2342c" stroke-width="5.400" stroke-linecap="round"/><path d="M967 58l14.500 15M981.500 58L967 73" stroke="#f6766c" stroke-width="3.600" stroke-linecap="round"/>
</svg>
<!-- left dock -->
<div class="a" style="left:0;top:172px;width:227px;height:557px;background:#e6e6e6"></div>
<!-- Properties palette -->
<div class="a" style="left:1px;top:172px;width:219px;height:298px;border:1px solid #5a5a5a;border-top:none;background:#f0f0f0"></div>
<div class="a" style="left:2px;top:172px;width:217px;height:21px;background:linear-gradient(#e3eaf2,#cfdae8 50%,#bccbdc)"></div>
<div class="a" style="left:2px;top:193px;width:217px;height:1px;background:#5f6a76"></div>
<div class="t" style="letter-spacing:-0.27px;left:4px;top:176px;color:#2a2a2a">Properties</div>
<svg style="left:202px;top:177px" width="13" height="12" viewBox="0 0 13 12"><rect x="0.5" y="0.5" width="12" height="11" rx="1.5" fill="#e4ebf3" stroke="#6f7a86"/><path d="M3.500 3 L9.500 9 M9.500 3 L3.500 9" stroke="#4c5662" stroke-width="2.400" fill="none"/><path d="M3.500 3 L9.500 9 M9.500 3 L3.500 9" stroke="#eef2f7" stroke-width="0.700" fill="none"/></svg>
<!-- type selector -->
<div class="a" style="left:4px;top:194px;width:212px;height:71px;background:linear-gradient(#ffffff,#f6f6f6 50%,#e6e6e6);border-left:1px solid #8a8a8a;border-right:1px solid #c8c8c8"></div>
<div class="a" style="left:8px;top:197px;width:66px;height:66px;background:linear-gradient(#f0f0f0,#ebebeb 74%,#e3e3e3 76%,#e1e1e1);border:1px solid #f2f2f2"></div>
<svg style="left:8px;top:197px" width="66" height="66" viewBox="0 0 66 66" font-family="Liberation Sans, sans-serif">
<g transform="translate(3 49) rotate(-5) skewY(4) scale(0.800 1)">
<text x="2.500" y="1.200" font-size="62" font-weight="bold" fill="#e0e0e0">R</text>
<text x="0" y="0" font-size="62" font-weight="bold" fill="#f7f7f7">R</text>
</g>
<path d="M40 24l24-8v28l-20 4z" fill="#f3f3f3" opacity="0.500"/>
</svg>
<div class="dd" style="left:205px;top:229px;border-left-width:4px;border-right-width:4px;border-top-width:4px;border-top-color:#9a9a9a"></div>
<!-- combo -->
<div class="a" style="left:5px;top:267px;width:127px;height:22px;border:1px solid #707070;border-radius:3px;background:linear-gradient(#f4f4f4,#ebebeb 50%,#dddddd 50%,#cfcfcf)"></div>
<div class="t" style="letter-spacing:-0.31px;left:9px;top:272px;color:#111">Family: Mass</div>
<div class="dd" style="left:119px;top:277px;border-left-width:4px;border-right-width:4px;border-top-width:4px;border-top-color:#111"></div>
<div class="t dis" style="letter-spacing:-0.20px;left:159px;top:270px;color:#b0b0b0">Edit Type</div>
<svg style="left:138px;top:269px" width="17" height="16" viewBox="0 0 17 16" fill="none" stroke="#a8a8a8"><rect x="0.5" y="0.5" width="5" height="5"/><rect x="0.5" y="8.5" width="5" height="5"/><rect x="8.5" y="0.5" width="5" height="4"/><rect x="8.5" y="6.5" width="7" height="9" fill="#f4f4f4"/><path d="M10 9.5h4M10 12.5h4"/></svg>
<!-- table -->
<div class="a" style="left:5px;top:291px;width:211px;height:149px;background:#fff"></div>
<div class="a" style="left:5px;top:291px;width:211px;height:18px;background:#dcdcdc"></div>
<div class="a" style="left:5px;top:327px;width:211px;height:18px;background:#dcdcdc"></div>
<div class="t" style="letter-spacing:-0.06px;left:9px;top:293px;color:#111">Constraints</div>
<div class="t" style="letter-spacing:-0.07px;left:9px;top:329px;color:#111">Identity Data</div>
<div class="t" style="letter-spacing:0.08px;left:15px;top:310px;color:#8c8c8c">Host</div>
<div class="t" style="letter-spacing:-0.16px;left:15px;top:346px;color:#111">OmniClass Nu...</div>
<div class="t" style="letter-spacing:-0.07px;left:15px;top:364px;color:#8c8c8c">OmniClass Title</div>
<div class="a" style="left:5px;top:326px;width:211px;height:0;border-top:1px dotted #8a8a8a"></div>
<div class="a" style="left:5px;top:362px;width:211px;height:0;border-top:1px dotted #8a8a8a"></div>
<div class="a" style="left:5px;top:380px;width:211px;height:0;border-top:1px dotted #8a8a8a"></div>
<div class="a" style="left:110px;top:309px;width:0;height:17px;border-left:1px dotted #8a8a8a"></div>
<div class="a" style="left:110px;top:345px;width:0;height:36px;border-left:1px dotted #8a8a8a"></div>
<div class="a" style="left:215px;top:309px;width:0;height:17px;border-left:1px dotted #8a8a8a"></div>
<div class="a" style="left:215px;top:345px;width:0;height:36px;border-left:1px dotted #8a8a8a"></div>
<div class="a" style="left:111px;top:345px;width:104px;height:17px;border:1px solid #111;background:#fff"></div>
<svg style="left:202px;top:295px" width="7" height="10" viewBox="0 0 7 10" fill="none" stroke="#111" stroke-width="1.3"><path d="M0.7 4 L3.5 1.2 L6.3 4 M0.7 8.5 L3.5 5.7 L6.3 8.5"/></svg>
<svg style="left:202px;top:331px" width="7" height="10" viewBox="0 0 7 10" fill="none" stroke="#111" stroke-width="1.3"><path d="M0.7 4 L3.5 1.2 L6.3 4 M0.7 8.5 L3.5 5.7 L6.3 8.5"/></svg>
<!-- bottom -->
<div class="t" style="letter-spacing:-0.11px;left:7px;top:446px;color:#1a5fb0;text-decoration:underline">Properties help</div>
<div class="a" style="left:140px;top:443px;width:74px;height:21px;border:1px solid #b4b4b4;border-radius:3px;background:#f2f2f2"></div>
<div class="t c" style="left:140px;top:447px;width:74px;color:#9c9c9c">Apply</div>
<!-- Project Browser -->
<div class="a" style="left:1px;top:476px;width:219px;height:254px;border:1px solid #5a5a5a;border-top:2px solid #4a4a4a;background:#f0f0f0"></div>
<div class="a" style="left:2px;top:478px;width:217px;height:21px;background:linear-gradient(#e3eaf2,#cfdae8 50%,#bccbdc)"></div>
<div class="a" style="left:2px;top:498px;width:217px;height:1px;background:#5f6a76"></div>
<div class="t" style="letter-spacing:-0.17px;left:3.5px;top:482px;color:#2a2a2a">test system - Project Browser</div>
<svg style="left:202px;top:483px" width="13" height="12" viewBox="0 0 13 12"><rect x="0.5" y="0.5" width="12" height="11" rx="1.5" fill="#e4ebf3" stroke="#6f7a86"/><path d="M3.500 3 L9.500 9 M9.500 3 L3.500 9" stroke="#4c5662" stroke-width="2.400" fill="none"/><path d="M3.500 3 L9.500 9 M9.500 3 L3.500 9" stroke="#eef2f7" stroke-width="0.700" fill="none"/></svg>
<div class="a" style="left:4px;top:499px;width:211px;height:230px;background:#fff;border-left:1px solid #8a8a8a"></div>
<!-- scrollbar -->
<div class="a" style="left:200px;top:499px;width:15px;height:230px;background:#f1f1f1"></div>
<div class="a" style="left:201px;top:518px;width:13px;height:126px;border:1px solid #979797;border-radius:2px;background:linear-gradient(90deg,#f3f3f3,#e2e2e2 45%,#cdcdcd 50%,#c4c4c4)"></div>
<div class="a" style="left:204px;top:577px;width:7px;height:1px;background:#555;box-shadow:0 2px 0 #555,0 4px 0 #555,0 1px 0 #fff,0 3px 0 #fff"></div>
<div class="dd" style="left:204px;top:507px;border-left-width:4px;border-right-width:4px;border-top:none;border-bottom:4px solid #333"></div>
<div class="dd" style="left:204px;top:715px;border-left-width:4px;border-right-width:4px;border-top:4px solid #333"></div>
<!-- tree lines -->
<div class="a" style="left:13px;top:515px;width:0;height:214px;border-left:1px dotted #9a9a9a"></div>
<div class="a" style="left:33px;top:517px;width:0;height:190px;border-left:1px dotted #9a9a9a"></div>
<div class="a" style="left:53px;top:536px;width:0;height:100px;border-left:1px dotted #9a9a9a"></div>
<div class="a" style="left:53px;top:680px;width:0;height:10px;border-left:1px dotted #9a9a9a"></div>
<div class="a" style="left:18px;top:510px;width:7px;height:0;border-top:1px dotted #9a9a9a"></div>
<div class="a" style="left:38px;top:528px;width:10px;height:0;border-top:1px dotted #9a9a9a"></div>
<div class="a" style="left:38px;top:654px;width:10px;height:0;border-top:1px dotted #9a9a9a"></div>
<div class="a" style="left:38px;top:672px;width:10px;height:0;border-top:1px dotted #9a9a9a"></div>
<div class="a" style="left:38px;top:708px;width:10px;height:0;border-top:1px dotted #9a9a9a"></div>
<div class="a" style="left:54px;top:546px;width:14px;height:0;border-top:1px dotted #9a9a9a"></div>
<div class="a" style="left:54px;top:564px;width:14px;height:0;border-top:1px dotted #9a9a9a"></div>
<div class="a" style="left:54px;top:582px;width:14px;height:0;border-top:1px dotted #9a9a9a"></div>
<div class="a" style="left:54px;top:600px;width:14px;height:0;border-top:1px dotted #9a9a9a"></div>
<div class="a" style="left:54px;top:618px;width:14px;height:0;border-top:1px dotted #9a9a9a"></div>
<div class="a" style="left:54px;top:636px;width:14px;height:0;border-top:1px dotted #9a9a9a"></div>
<div class="a" style="left:54px;top:690px;width:14px;height:0;border-top:1px dotted #9a9a9a"></div>
<!-- expanders -->
<div class="xb" style="left:9px;top:506px"><i></i></div>
<div class="xb" style="left:29px;top:524px"><i></i></div>
<div class="xb" style="left:29px;top:650px"><i></i><b></b></div>
<div class="xb" style="left:29px;top:668px"><i></i></div>
<div class="xb" style="left:29px;top:704px"><i></i><b></b></div>
<!-- views icon -->
<svg style="left:26px;top:502px" width="15" height="15" viewBox="0 0 15 15" fill="none" stroke="#222" stroke-width="1.2"><path d="M0.6 4V0.6H4M11 0.6h3.4V4M14.4 11v3.4H11M4 14.4H0.6V11"/><path d="M5 3.5h7l-1.5 8h-7z" stroke="#444" stroke-width="1"/></svg>
<!-- tree text -->
<div class="t" style="letter-spacing:-0.28px;left:47px;top:502px">Views (all)</div>
<div class="t" style="letter-spacing:-0.29px;left:51px;top:520px">Floor Plans</div>
<div class="t" style="letter-spacing:-0.39px;left:71px;top:538px">Level 1</div>
<div class="t" style="letter-spacing:-0.39px;left:71px;top:556px">Level 2</div>
<div class="t" style="letter-spacing:-0.39px;left:71px;top:574px">Level 3</div>
<div class="t" style="letter-spacing:-0.39px;left:71px;top:592px">Level 4</div>
<div class="t" style="letter-spacing:-0.39px;left:71px;top:610px">Level 5</div>
<div class="t" style="letter-spacing:-0.42px;left:71px;top:628px">Site</div>
<div class="t" style="letter-spacing:-0.23px;left:51px;top:646px">Ceiling Plans</div>
<div class="t" style="letter-spacing:-0.31px;left:51px;top:664px">3D Views</div>
<div class="a" style="left:68px;top:680px;width:30px;height:18px;background:#e4e4e4"></div>
<div class="t" style="letter-spacing:-0.17px;left:71px;top:682px;font-weight:bold">{3D}</div>
<div class="a" style="left:51px;top:699px;width:149px;height:17px;overflow:hidden"><div class="t" style="letter-spacing:-0.15px;left:0;top:1px">Elevations (Building Elevatio</div></div>
<div class="a" style="left:47px;top:717px;width:60px;height:7px;overflow:hidden"><div class="t" style="letter-spacing:-0.15px;left:0;top:1px">Legends</div></div>
<svg style="left:24px;top:716px" width="18" height="8" viewBox="0 0 18 8" fill="none" stroke="#333" stroke-width="1.4"><rect x="0.7" y="0.7" width="16" height="10"/><path d="M0.7 3.6h16" stroke-width="1.6"/><path d="M3 6.2h4M9 6.2h5" stroke-width="1"/></svg>
<!-- bottom bars of dock -->
<div class="a" style="left:0;top:724px;width:227px;height:3px;background:#e8e8e8"></div>
<div class="a" style="left:23px;top:725px;width:146px;height:3px;border:1px solid #8c8c8c;border-bottom:none;background:#f2f2f2"></div>
<!-- viewport -->
<div class="a" style="left:220px;top:172px;width:7px;height:557px;background:#e9e9e9"></div>
<div class="a" style="left:227px;top:172px;width:1px;height:557px;background:#4e4e4e"></div>
<div class="a" style="left:228px;top:172px;width:1120px;height:552px;background:#fff"></div>
<div class="a" style="left:228px;top:724px;width:1137px;height:3px;background:#ececec"></div>
<!-- right scrollbar -->
<div class="a" style="left:1348px;top:172px;width:15px;height:552px;background:#f0f0f0"></div>
<div class="a" style="left:1363px;top:172px;width:2px;height:555px;background:#c9c9c9"></div>
<div class="a" style="left:1349px;top:441px;width:14px;height:14px;border:1px solid #8f8f8f;border-radius:2px;background:linear-gradient(90deg,#f6f6f6,#e6e6e6 50%,#c4c4c4)"></div>
<div class="dd" style="left:1352px;top:180px;border-left-width:4px;border-right-width:4px;border-top:none;border-bottom:4px solid #333"></div>
<div class="dd" style="left:1352px;top:714px;border-left-width:4px;border-right-width:4px;border-top:4px solid #333"></div>
<!-- view control bar hints -->
<div class="a" style="left:307px;top:725px;width:16px;height:3px;background:#3a3f4a"></div>
<div class="a" style="left:310px;top:726px;width:9px;height:2px;background:#e4e4e4"></div>
<div class="a" style="left:333px;top:726px;width:11px;height:2px;background:#3a86d8"></div>
<div class="a" style="left:352px;top:725px;width:7px;height:3px;background:#e8b820;border-radius:3px 3px 0 0"></div>
<div class="a" style="left:374px;top:725px;width:8px;height:4px;border:1.500px solid #3a7fd0;border-bottom:none;border-radius:4px 4px 0 0"></div>
<div class="a" style="left:400px;top:726px;width:3px;height:2px;background:#333"></div>
<div class="a" style="left:422px;top:726px;width:3px;height:2px;background:#333"></div>
<div class="a" style="left:434px;top:724px;width:12px;height:5px;border:1.500px solid #3a3a3a;border-bottom:none;border-radius:6px 6px 0 0"></div>
<div class="a" style="left:460px;top:726px;width:6px;height:3px;border:1.200px solid #3a3a3a;border-bottom:none;border-radius:3px 3px 0 0"></div>
<div class="a" style="left:913px;top:725px;width:13px;height:3px;border:1px solid #8a8a8a;border-bottom:none;background:#f4f4f4"></div>
<!-- bottom dark line -->
<div class="a" style="left:0;top:727px;width:1365px;height:2px;background:#2f3338"></div>
<!-- view window buttons -->
<div class="a" style="left:227px;top:172px;width:1136px;height:1px;background:#4c4c4c"></div>
<svg style="left:1290px;top:178px" width="58" height="18" viewBox="1290 178 58 18" fill="none" stroke="#333" stroke-width="1.100">
<rect x="1296.600" y="187.400" width="11" height="3.200" rx="0.500" fill="#fff"/>
<rect x="1317" y="181.600" width="7.600" height="8" rx="0.800" fill="#fff"/>
<rect x="1314.600" y="183.600" width="8" height="8" rx="0.800" fill="#fff"/>
<rect x="1317.500" y="186.200" width="2" height="3" stroke-width="0.900"/>
<path d="M1333.800 183.800l7.700 6.700M1341.500 183.800l-7.700 6.700" stroke-width="4" stroke-linecap="round"/>
<path d="M1333.800 183.800l7.700 6.700M1341.500 183.800l-7.700 6.700" stroke="#fff" stroke-width="1.800" stroke-linecap="round"/>
</svg>
<!-- mass -->
<svg style="left:630px;top:290px" width="320" height="320" viewBox="630 290 320 320">
<rect x="636.5" y="297.5" width="302" height="302" fill="#a3a3a7" stroke="#111" stroke-width="1"/>
<path d="M647.500 305V588" stroke="#77777b" stroke-width="1"/><g stroke="#b4b4b8" stroke-width="1"><path d="M658.500 306V577M669.500 306V566"/><path d="M669 566.5H930M658 577.5H930"/></g>
<path d="M647 587.5H930" stroke="#77777b" stroke-width="1"/>
<rect x="637" y="298" width="46" height="8" fill="#c9c0c0"/>
<path d="M647.5 298v8M658.5 298v8M669.5 298v8" stroke="#b4a8a8"/>
<path d="M637 443.500 L681 423 L684 431 L637 450.500Z" fill="#c9c0c0"/><path d="M641 449.500l3 2 0-3.500zM652 444.500l3 2 0-3.500zM663 439.500l3 2 0-3.500zM674 434.500l3 2 0-3.500z" fill="#b9b4b8"/>
<path d="M640 597 L680 553 L688 558 L650 599Z" fill="#c9c0c0"/>
<path d="M637 589 L675 551 L681 556 L640 599 L637 599Z" fill="#c9c0c0"/>
<path d="M786 599 L803.500 552.500 L810 556 L792.500 599Z" fill="#c9c0c0"/>
<rect x="930.500" y="553" width="7.500" height="46" fill="#c9c0c0"/><path d="M930.500 566.500h7.500M930.500 577.500h7.500M930.500 587.500h7.500" stroke="#b4acad" stroke-width="0.800"/>
<rect x="680" y="298" width="258.5" height="258" fill="#586573"/>
<path d="M679.5 298V556.5M679 556.500H938.500" stroke="#111" stroke-width="1" fill="none"/>
<path d="M637 599 L680 556" stroke="#111" stroke-width="1"/>
<rect x="805" y="298" width="3" height="8" fill="#b9bcc4"/>
<rect x="930" y="428" width="8" height="3" fill="#b9bcc4"/>
<path d="M929.500 298V305.500H938" stroke="#a9b2bd" fill="none"/>
<path d="M679 425 l5 7 h-5z" fill="#c9c0c0"/>
<path d="M803 551 l9 5 h-9z" fill="#c9c0c0"/>
<path d="M680 298h4v8h-4z" fill="#c9c0c0"/>
<path d="M636.500 297.500H938.500V599.500H636.500Z" fill="none" stroke="#111"/>
<rect x="636" y="298" width="48" height="7" fill="#cfc4c5"/><path d="M647.500 298v7" stroke="#6a6468"/><path d="M658.500 298v7M669.500 298v7" stroke="#bfb3b4"/><rect x="682" y="298" width="3" height="8" fill="#d4d2d4"/>
</svg>
<!-- viewcube -->
<svg style="left:1220px;top:215px" width="115" height="110" viewBox="1220 215 115 110" font-family="Liberation Sans, sans-serif">
<circle cx="1277.200" cy="269.800" r="41.500" fill="none" stroke="#f3f3f3" stroke-width="11"/>
<circle cx="1277.200" cy="269.800" r="47" fill="none" stroke="#c4c4c4" stroke-width="0.900" stroke-dasharray="2.500 1.200"/>
<circle cx="1277.200" cy="269.800" r="36" fill="none" stroke="#c4c4c4" stroke-width="0.900" stroke-dasharray="2.500 1.200"/>
<rect x="1252" y="245" width="51" height="51" rx="4" fill="#fafafa"/>
<rect x="1257.500" y="250.500" width="40" height="40" rx="1" fill="#ececec" stroke="#ababab"/>
<rect x="1265" y="257.500" width="24.500" height="25.500" fill="#e5e7e9"/>
<text x="1277.600" y="275" font-size="11" font-weight="bold" text-anchor="middle" fill="#8e8e8e" textLength="16" lengthAdjust="spacingAndGlyphs">TOP</text>
<g font-size="16" font-weight="bold" text-anchor="middle" fill="#f4f4f4" stroke="#a8a8a8" stroke-width="0.800">
<text x="1277.600" y="234">N</text><text x="1277.600" y="320.300">S</text><text x="1233.800" y="277.300">W</text><text x="1320.600" y="277.300">E</text></g>
</svg>
<!-- nav bar -->
<div class="a" style="left:1312px;top:334px;width:34px;height:116px;border:1.500px solid #a8a8a8;border-radius:5px;background:#f5f5f5"></div>
<div class="a" style="left:1316px;top:390px;width:26px;height:1px;background:#cfcfcf"></div>
<svg style="left:1312px;top:334px" width="34" height="116" viewBox="0 0 34 116" fill="none">
<circle cx="26.500" cy="6.500" r="3.500" fill="#c4c4c4" stroke="#a0a0a0" stroke-width="0.800"/><path d="M25 5l3 3M28 5l-3 3" stroke="#fff" stroke-width="1"/>
<circle cx="26.500" cy="108.500" r="3.500" fill="#c4c4c4" stroke="#a0a0a0" stroke-width="0.800"/><path d="M24.800 108.500h3.400" stroke="#fff" stroke-width="1.200"/>
<circle cx="14.500" cy="29.500" r="9.500" fill="#ededed" stroke="#a8a8a8" stroke-width="1.300"/><path d="M14.500 29.500h10" stroke="#a8a8a8" stroke-width="5"/><circle cx="14.500" cy="29.500" r="5" fill="#fafafa" stroke="#a8a8a8" stroke-width="1.200"/>
<path d="M18.500 35.500l3-2.500h6.500v6.500l-2.500 3h-7z" fill="#7fb2e6" stroke="#3f78b8" stroke-width="0.900"/><path d="M18.500 35.500h7v7M25.500 35.500l2.500-2.500" stroke="#d4e6f8" stroke-width="0.900"/>
<path d="M13.500 51h6l-3 3z" fill="#8c8c8c"/>
<path d="M13.500 92h6l-3 3z" fill="#8c8c8c"/>
<rect x="9" y="67.500" width="10" height="9.500" fill="#b6d6a6" stroke="#7fae70" stroke-width="1"/>
<circle cx="19.800" cy="77.500" r="3" fill="#f4f8fb" stroke="#6e6e6e" stroke-width="1.100"/><path d="M22 79.800l2.800 2.800" stroke="#6e6e6e" stroke-width="1.600"/>
</svg>

</body></html>
